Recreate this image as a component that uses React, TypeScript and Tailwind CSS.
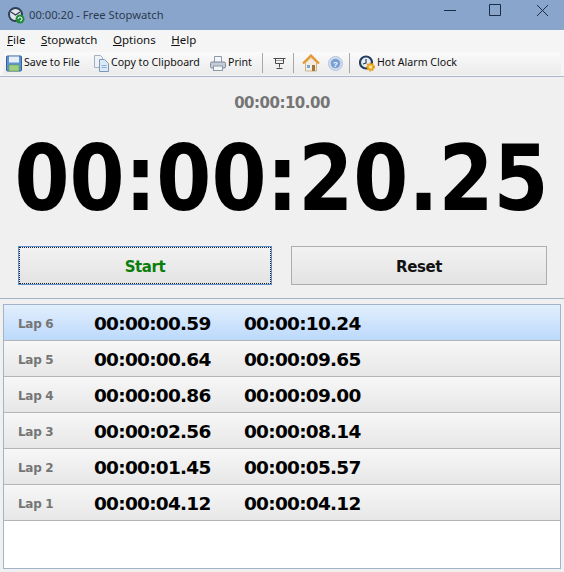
import type { ReactNode } from 'react'

const laps = [
  ['Lap 6', '00:00:00.59', '00:00:10.24'],
  ['Lap 5', '00:00:00.64', '00:00:09.65'],
  ['Lap 4', '00:00:00.86', '00:00:09.00'],
  ['Lap 3', '00:00:02.56', '00:00:08.14'],
  ['Lap 2', '00:00:01.45', '00:00:05.57'],
  ['Lap 1', '00:00:04.12', '00:00:04.12'],
]

function Menu({ letter, rest }: { letter: string; rest: string }) {
  return (
    <span>
      <span className="underline">{letter}</span>
      {rest}
    </span>
  )
}

function Tool({ icon, label, className }: { icon: ReactNode; label: string; className: string }) {
  return (
    <div className={`flex items-center gap-[2px] whitespace-nowrap ${className}`}>
      {icon}
      <span>{label}</span>
    </div>
  )
}

function Sep() {
  return <div className="h-[20px] w-px bg-[#a8a8a8]" />
}

function SaveIcon() {
  return (
    <svg width="16" height="17" viewBox="0 0 16 17">
      <rect x="0.5" y="1" width="15" height="15" rx="1" fill="#5f93cf" stroke="#35609a" />
      <rect x="3" y="1.5" width="10" height="6" fill="#e8eef6" />
      <rect x="3" y="10" width="10" height="6" fill="#9fd07f" stroke="#5d9a4a" strokeWidth="0.5" />
    </svg>
  )
}

function CopyIcon() {
  return (
    <svg width="15" height="17" viewBox="0 0 15 17">
      <path d="M0.500 0.500h6l2 2v10h-8z" fill="#eef2f7" stroke="#a3b1c2" />
      <path d="M5.500 4.500h5l4 4v8h-9z" fill="#dbe8f6" stroke="#7d98b8" />
      <path d="M7.500 10.500h5M7.500 12.500h5" stroke="#8fb0d4" />
    </svg>
  )
}

function PrintIcon() {
  return (
    <svg width="16" height="17" viewBox="0 0 16 17">
      <path d="M4.500 7V1.500h7V7" fill="#f4f6f9" stroke="#8d99a9" />
      <rect x="0.500" y="7" width="15" height="6" rx="1.500" fill="#c3ccd8" stroke="#7b889a" />
      <rect x="3.500" y="11" width="9" height="4.500" fill="#f4f6f9" stroke="#8d99a9" />
    </svg>
  )
}

function TrophyIcon() {
  return (
    <svg width="13" height="13" viewBox="0 0 13 13">
      <path d="M0.500 1.500h12M2.500 2v4.500h8V2M6.500 6.500v4M3.500 11.500h6" stroke="#4a4a4a" fill="none" />
      <path d="M3 3.500h7" stroke="#9a9a9a" />
    </svg>
  )
}

function HomeIcon() {
  return (
    <svg width="18" height="18" viewBox="0 0 18 18">
      <path d="M3.500 8.500v8.500h11V8.500L9 3.500z" fill="#f2ede0" stroke="#c9b48c" />
      <path d="M1 9.500 9 1.500l8 8" fill="none" stroke="#e8962f" strokeWidth="2.2" />
      <rect x="10" y="11" width="3" height="6" fill="#a8713a" />
      <rect x="5" y="11" width="3" height="3" fill="#7aa5d6" />
    </svg>
  )
}

function HelpIcon() {
  return (
    <svg width="15" height="15" viewBox="0 0 15 15">
      <circle cx="7.500" cy="7.500" r="7" fill="#d3deed" stroke="#b3c4dc" />
      <circle cx="7.500" cy="7.500" r="4.800" fill="#7a9fd4" />
      <text x="7.500" y="10.500" textAnchor="middle" fontSize="8" fontWeight="700" fill="#fff" fontFamily="'Liberation Sans', sans-serif">?</text>
    </svg>
  )
}

function AlarmIcon() {
  return (
    <svg width="16" height="17" viewBox="0 0 16 17">
      <circle cx="7" cy="7.500" r="6" fill="#e6edf4" stroke="#24405e" strokeWidth="2.200" />
      <path d="M7 4v4L4 9" stroke="#2f3f55" strokeWidth="1.200" fill="none" />
      <circle cx="11.500" cy="12" r="3.500" fill="#f4b42c" stroke="#e0951f" strokeWidth="1.800" strokeDasharray="1.500 1" />
      <circle cx="11.500" cy="12" r="1.300" fill="#fff2c4" />
    </svg>
  )
}

function AppIcon() {
  return (
    <svg width="17" height="17" viewBox="0 0 17 17">
      <circle cx="7.500" cy="7.500" r="6.500" fill="#e2e5ea" stroke="#2c3f54" strokeWidth="2" />
      <path d="M3 5l4.500 3L12 5" stroke="#2c3f54" strokeWidth="1.300" fill="none" />
      <circle cx="12" cy="12" r="4.500" fill="#238a3c" />
      <path d="M10 12a2 2 0 1 1 2 2" stroke="#fff" fill="none" />
    </svg>
  )
}

export default function App() {
  return (
    <div className="flex h-[572px] w-[564px] flex-col overflow-hidden bg-[#f0f0f0] font-['Noto_Sans',sans-serif]">
      <div className="flex h-[30px] items-center bg-[#8aa5cc] pl-[8px] text-[11.2px] text-[#2c3b50]">
        <AppIcon />
        <span className="ml-[4px] flex-1">00:00:20 - Free Stopwatch</span>
        <svg width="130" height="30" viewBox="0 0 130 30" fill="none" stroke="#1c2c44">
          <path d="M10 10.500h12M55.500 4.500h11v11h-11zM103 5l11 11M114 5l-11 11" />
        </svg>
      </div>

      <div className="flex h-[20px] items-center gap-[15.5px] bg-[#f5f5f5] pl-[7px] text-[11.5px] text-[#111]">
        <Menu letter="F" rest="ile" />
        <Menu letter="S" rest="topwatch" />
        <Menu letter="O" rest="ptions" />
        <Menu letter="H" rest="elp" />
      </div>

      <div className="flex h-[26px] items-center bg-[#f5f5f5] pl-[3px] pr-[3px] text-[10.6px] text-[#111]">
        <div className="flex h-[23px] w-full items-center rounded-[2px] bg-gradient-to-b from-[#fafafa] to-[#ebebeb] pl-[3px]">
          <Tool icon={<SaveIcon />} label="Save to File" className="w-[88px]" />
          <Tool icon={<CopyIcon />} label="Copy to Clipboard" className="w-[116px]" />
          <Tool icon={<PrintIcon />} label="Print" className="w-[52px]" />
          <Sep />
          <div className="ml-[10px] mr-[7px] flex"><TrophyIcon /></div>
          <Sep />
          <div className="ml-[8px] flex"><HomeIcon /></div>
          <div className="ml-[8px] mr-[6px] flex"><HelpIcon /></div>
          <Sep />
          <Tool icon={<AlarmIcon />} label="Hot Alarm Clock" className="ml-[9px]" />
        </div>
      </div>

      <div className="h-px bg-[#a9b8cc]" />

      <div className="flex h-[222px] flex-col items-center border-b border-[#a3b3c6]">
        <div className="mt-[15px] font-['DejaVu_Sans',sans-serif] text-[15px] leading-[22px] font-bold tracking-[-0.5px] text-[#757575]">00:00:10.00</div>
        <div className="mt-[13px] scale-x-[0.88] font-['DejaVu_Sans',sans-serif] text-[90px] leading-[104px] font-bold whitespace-nowrap text-black">00:00:20.25</div>
        <div className="mt-[15px] flex w-full gap-[19px] pl-[18px] font-['DejaVu_Sans',sans-serif] text-[15px] font-bold tracking-[-0.4px]">
          <button className="flex h-[39px] w-[254px] items-center justify-center border border-[#5b8fd0] bg-gradient-to-b from-[#f2f2f2] to-[#e3e3e3] pt-[3px] text-[#0a7d0a] outline-1 -outline-offset-2 outline-dotted outline-[#222]">
            Start
          </button>
          <button className="flex h-[39px] w-[256px] items-center justify-center border border-[#adadad] bg-gradient-to-b from-[#f2f2f2] to-[#e3e3e3] pt-[3px] text-[#111]">
            Reset
          </button>
        </div>
      </div>

      <div className="mx-[3px] mt-[5px] h-[265px] border border-[#a3b3c9] bg-white font-['DejaVu_Sans',sans-serif]">
        {laps.map((lap, i) => (
          <div
            key={lap[0]}
            className={`flex h-[36px] items-center border-b border-[#b5b5b5] pt-[2px] font-bold ${
              i === 0 ? 'bg-gradient-to-b from-[#e2effd] to-[#bcd9fb]' : 'bg-gradient-to-b from-[#f7f7f7] to-[#e7e7e7]'
            }`}
          >
            <span className="ml-[14px] w-[76px] text-[12px] tracking-[-0.3px] text-[#757575]">{lap[0]}</span>
            <span className="w-[150px] text-[18.5px] tracking-[-0.75px] text-black">{lap[1]}</span>
            <span className="text-[18.5px] tracking-[-0.75px] text-black">{lap[2]}</span>
          </div>
        ))}
      </div>
    </div>
  )
}
